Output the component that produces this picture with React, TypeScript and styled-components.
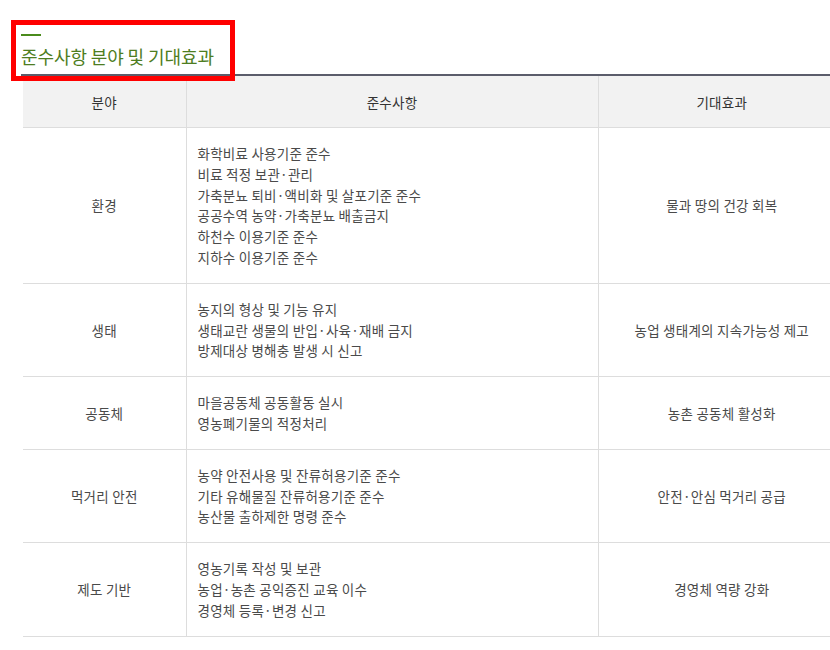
import styled, { createGlobalStyle } from 'styled-components';

const rows = [
	{
		field: '환경',
		items: [
			'화학비료 사용기준 준수',
			'비료 적정 보관·관리',
			'가축분뇨 퇴비·액비화 및 살포기준 준수',
			'공공수역 농약·가축분뇨 배출금지',
			'하천수 이용기준 준수',
			'지하수 이용기준 준수',
		],
		effect: '물과 땅의 건강 회복',
	},
	{
		field: '생태',
		items: ['농지의 형상 및 기능 유지', '생태교란 생물의 반입·사육·재배 금지', '방제대상 병해충 발생 시 신고'],
		effect: '농업 생태계의 지속가능성 제고',
	},
	{
		field: '공동체',
		items: ['마을공동체 공동활동 실시', '영농폐기물의 적정처리'],
		effect: '농촌 공동체 활성화',
	},
	{
		field: '먹거리 안전',
		items: ['농약 안전사용 및 잔류허용기준 준수', '기타 유해물질 잔류허용기준 준수', '농산물 출하제한 명령 준수'],
		effect: '안전·안심 먹거리 공급',
	},
	{
		field: '제도 기반',
		items: ['영농기록 작성 및 보관', '농업·농촌 공익증진 교육 이수', '경영체 등록·변경 신고'],
		effect: '경영체 역량 강화',
	},
];

export default function App() {
	return (
		<>
			<GlobalStyle />
			<Page>
				<Highlight />
				<TitleBlock>
					<Bar />
					<Title>준수사항 분야 및 기대효과</Title>
				</TitleBlock>
				<Table>
					<colgroup>
						<col style={{ width: '163px' }} />
						<col style={{ width: '412px' }} />
						<col style={{ width: '247px' }} />
					</colgroup>
					<thead>
						<tr>
							<Th>분야</Th>
							<Th>준수사항</Th>
							<Th>기대효과</Th>
						</tr>
					</thead>
					<tbody>
						{rows.map((r) => (
							<tr key={r.field}>
								<Td>{r.field}</Td>
								<Td $left>
									{r.items.map((t) => (
										<Line key={t}>{t}</Line>
									))}
								</Td>
								<Td>{r.effect}</Td>
							</tr>
						))}
					</tbody>
				</Table>
			</Page>
		</>
	);
}

const GlobalStyle = createGlobalStyle`
	html, body {
		margin: 0;
		background: #fff;
		overflow: hidden;
	}
	body {
		font-family: "Noto Sans CJK KR", "Noto Sans", sans-serif;
	}
`;

const Page = styled.div`
	position: relative;
	width: 845px;
	padding: 34px 0 0 21px;
`;

const Highlight = styled.div`
	position: absolute;
	left: 11px;
	top: 20px;
	width: 214px;
	height: 51px;
	border: 5px solid #ff0000;
	z-index: 2;
	pointer-events: none;
`;

const TitleBlock = styled.div`
	border-bottom: 2px solid #5b5d6b;
	padding-bottom: 6px;
`;

const Bar = styled.div`
	width: 20px;
	height: 2px;
	background: #4a8b1c;
	margin-bottom: 8px;
`;

const Title = styled.h2`
	margin: 0;
	font-size: 18px;
	line-height: 24px;
	font-weight: 400;
	color: #4e7d21;
	letter-spacing: -0.1px;
`;

const Table = styled.table`
	margin-left: 2px;
	width: 822px;
	border-collapse: collapse;
	table-layout: fixed;
	font-size: 13.5px;
	letter-spacing: 0.25px;
`;

const Th = styled.th`
	height: 51px;
	padding: 0;
	background: #f2f2f2;
	color: #333;
	font-weight: 400;
	text-align: center;
	border-bottom: 1px solid #dddddd;
	border-left: 1px solid #dddddd;
	&:first-child {
		border-left: none;
	}
`;

const Td = styled.td<{ $left?: boolean }>`
	padding: 15px 11px;
	line-height: 20.8px;
	color: #4a4a4a;
	text-align: ${(p) => (p.$left ? 'left' : 'center')};
	vertical-align: middle;
	border-bottom: 1px solid #dddddd;
	border-left: 1px solid #dddddd;
	&:first-child {
		border-left: none;
	}
`;

const Line = styled.div``;
